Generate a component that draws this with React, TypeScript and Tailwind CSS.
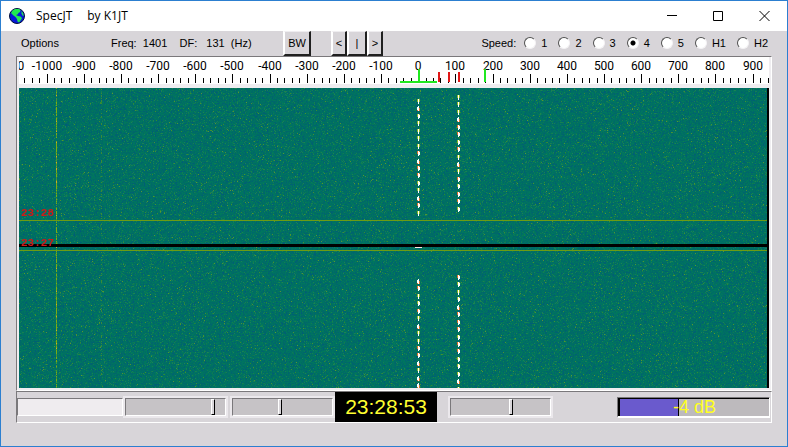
import { useEffect, useRef, useState } from "react";

const WIDTH = 748;
const HEIGHT = 300;

function makeRandom(seed: number) {
  let s = seed;
  return () => {
    s = (s * 1664525 + 1013904223) % 4294967296;
    return s / 4294967296;
  };
}

function drawWaterfall(ctx: CanvasRenderingContext2D) {
  const random = makeRandom(1401);
  const image = ctx.createImageData(WIDTH, HEIGHT);
  for (let i = 0; i < WIDTH * HEIGHT; i++) {
    const n = random();
    const j = random();
    let r = 0;
    let g = 102 + j * 18;
    let b = 106 - j * 14;
    if (n > 0.988) {
      r = 40 + j * 50;
      g = 136 + j * 16;
      b = 50;
    } else if (n > 0.88) {
      r = 8 + j * 22;
      g = 120 + j * 12;
      b = 82;
    } else if (n < 0.06) {
      g = 94;
      b = 118;
    }
    image.data[i * 4] = r;
    image.data[i * 4 + 1] = g;
    image.data[i * 4 + 2] = b;
    image.data[i * 4 + 3] = 255;
  }
  ctx.putImageData(image, 0, 0);

  for (let y = 0; y < HEIGHT; y++) {
    const n = random();
    if (n > 0.1) {
      ctx.fillStyle = n > 0.93 ? "#d0a828" : n > 0.45 ? "#7cac14" : "#449434";
      ctx.fillRect(37, y, 1, 1);
    }
    if (random() > 0.72) {
      ctx.fillStyle = "#3a8a38";
      ctx.fillRect(82, y, 1, 1);
    }
  }

  const trace = (x: number, from: number, to: number) => {
    for (let y = from; y < to; y += 7.44) {
      const top = Math.round(y);
      const n = random();
      ctx.fillStyle = n > 0.5 ? "#d8702c" : "#8cb828";
      ctx.fillRect(x - 1, top + (n > 0.7 ? 2 : 0), 3, 3);
      ctx.fillStyle = "#ffffff";
      ctx.fillRect(x, top, 1, 5);
      if (n > 0.35) {
        ctx.fillRect(n > 0.7 ? x - 1 : x, top + 1, 2, 3);
      }
    }
  };
  trace(399, 11, 126);
  trace(439, 7, 122);
  trace(399, 191, 300);
  trace(439, 187, 300);

  ctx.fillStyle = "#6c9c14";
  ctx.fillRect(0, 132, WIDTH, 1);
  ctx.fillRect(0, 162, WIDTH, 1);
  ctx.fillStyle = "#000000";
  ctx.fillRect(0, 156, WIDTH, 3);
  ctx.fillStyle = "#ffe8e0";
  ctx.fillRect(396, 159, 7, 1);
}

function Waterfall() {
  const ref = useRef<HTMLCanvasElement>(null);
  useEffect(() => {
    const ctx = ref.current?.getContext("2d");
    if (ctx) drawWaterfall(ctx);
  }, []);
  return (
    <div className="relative border-r-2 border-black">
      <canvas ref={ref} width={WIDTH} height={HEIGHT} className="block h-auto w-full" />
      <span className="absolute top-[40%] left-[2px] font-['Liberation_Mono',monospace] text-[11px] leading-[10px] font-bold text-[#d01818]">
        23:28
      </span>
      <span className="absolute top-[50%] left-[2px] font-['Liberation_Mono',monospace] text-[11px] leading-[10px] font-bold text-[#d01818]">
        23:27
      </span>
    </div>
  );
}

const freqToX = (f: number) => Math.round(399.2 + f * 0.3716);

function Ruler() {
  const ticks = Array.from({ length: 101 }, (_, i) => -1060 + i * 20);
  const labels = Array.from({ length: 21 }, (_, i) => -1100 + i * 100);
  return (
    <svg viewBox="0 0 750 31" className="block h-auto w-full" shapeRendering="crispEdges">
      <rect width="750" height="27" fill="#fff" />
      <rect y="27" width="750" height="4" fill="#efedf0" />
      {ticks.map((f) => (
        <rect
          key={f}
          x={freqToX(f)}
          y={f % 100 === 0 ? 17 : 21}
          width="1"
          height={f % 100 === 0 ? 9 : 5}
          fill="#000"
        />
      ))}
      <g className="font-[Roboto,sans-serif] text-[12px]" textAnchor="middle">
        {labels.map((f) => (
          <text key={f} x={freqToX(f)} y="13">
            {f}
          </text>
        ))}
      </g>
      <g fill="#20e820">
        <rect x="381" y="24" width="37" height="2" />
        <rect x="399" y="12" width="2" height="13" />
        <rect x="465" y="12" width="2" height="13" />
      </g>
      <g fill="#e01818">
        <rect x="419" y="15" width="2" height="10" />
        <rect x="429" y="15" width="2" height="10" />
        <rect x="439" y="15" width="2" height="10" />
      </g>
    </svg>
  );
}

function Scale({ label, value }: { label: string; value: number }) {
  return (
    <input
      type="range"
      aria-label={label}
      defaultValue={value}
      className="h-[18px] w-[101px] appearance-none border border-t-[#7a787b] border-r-white border-b-white border-l-[#7a787b] bg-[#c6c3c6] ring-2 ring-[#ebe8ec] [&::-webkit-slider-thumb]:h-4 [&::-webkit-slider-thumb]:w-1 [&::-webkit-slider-thumb]:appearance-none [&::-webkit-slider-thumb]:border [&::-webkit-slider-thumb]:border-t-white [&::-webkit-slider-thumb]:border-r-black [&::-webkit-slider-thumb]:border-b-black [&::-webkit-slider-thumb]:border-l-white [&::-webkit-slider-thumb]:bg-[#d9d6da]"
    />
  );
}

function ToolButton({ children, className }: { children: string; className: string }) {
  return (
    <button
      className={`h-[25px] border-t border-r-2 border-b-2 border-l-2 border-t-[#efedf0] border-r-[#202020] border-b-[#202020] border-l-white text-center ${className}`}
    >
      {children}
    </button>
  );
}

function Globe() {
  return (
    <svg viewBox="0 0 16 16" className="h-4 w-4">
      <circle cx="8" cy="8" r="7.5" fill="#0818d8" stroke="#001038" />
      <path d="M3.500 2.500 6 1h4l1.500 1L11 4 9.500 5 8.500 6.500 7 7l2 1 2.500.5L13 10l-1 2-2 2.500-1.500-1L8 11 6.500 9 4.500 7.500 2 5z" fill="#20e850" />
      <path d="m12.500 3 1.500 2 .8 3-1.300-.5-1-2z" fill="#20e850" />
    </svg>
  );
}

export default function App() {
  const [speed, setSpeed] = useState("4");
  return (
    <div className="flex min-h-screen flex-col border border-[#2c7fd0] bg-[#d8d5d9] font-['Liberation_Sans',Arial,sans-serif] text-[11px] leading-4 text-black">
      <header className="flex h-[30px] items-center bg-white pl-2">
        <Globe />
        <h1 className="ml-[11px] grow font-['Open_Sans',sans-serif] text-[12px] whitespace-pre">
          SpecJT<span className="ml-[15px]">by K1JT</span>
        </h1>
        <div className="flex">
          <button aria-label="Minimize" className="grid h-7 w-[46px] place-items-center">
            <svg viewBox="0 0 11 11" className="h-[11px] w-[11px]" stroke="#000">
              <path d="M0 4.500h10" />
            </svg>
          </button>
          <button aria-label="Maximize" className="grid h-7 w-[46px] place-items-center">
            <svg viewBox="0 0 11 11" className="h-[11px] w-[11px]" stroke="#000" fill="none">
              <path d="M.5.5h9v9h-9z" />
            </svg>
          </button>
          <button aria-label="Close" className="grid h-7 w-[46px] place-items-center">
            <svg viewBox="0 0 11 11" className="h-[11px] w-[11px]" stroke="#000">
              <path d="m.5 0 10 10m0-10-10 10" />
            </svg>
          </button>
        </div>
      </header>

      <main className="px-[15px]">
        <div className="flex h-[25px] items-start leading-6">
          <button className="ml-[5px] w-[90px] text-left">Options</button>
          <p className="w-[156px] whitespace-pre">Freq:  1401    DF:   131  (Hz)</p>
          <ToolButton className="ml-4 w-7 leading-[22px]">BW</ToolButton>
          <div className="ml-5 flex leading-[22px]">
            <ToolButton className="w-4">{"<"}</ToolButton>
            <ToolButton className="w-5">|</ToolButton>
            <ToolButton className="w-4">{">"}</ToolButton>
          </div>
          <fieldset className="ml-auto flex items-center pr-1">
            <legend className="float-left mr-2">Speed:</legend>
            <div className="flex gap-[11px]">
              {["1", "2", "3", "4", "5", "H1", "H2"].map((s) => (
                <label key={s} className="flex items-center gap-[5px]">
                  <input
                    type="radio"
                    name="speed"
                    checked={speed === s}
                    onChange={() => setSpeed(s)}
                    className="h-3 w-3 appearance-none rounded-full border border-t-[#505050] border-r-[#f4f2f4] border-b-[#f4f2f4] border-l-[#505050] bg-white checked:bg-[radial-gradient(circle,#000_2px,#fff_3px)]"
                  />
                  {s}
                </label>
              ))}
            </div>
          </fieldset>
        </div>

        <section className="border border-t-[#7a787b] border-r-white border-b-white border-l-[#7a787b] bg-[#efedf0] px-[2px] pb-[2px]">
          <Ruler />
          <Waterfall />
        </section>

        <footer className="flex h-8 items-center border border-t-[#7a787b] border-r-white border-b-white border-l-[#7a787b]">
          <input
            aria-label="Message"
            className="h-[18px] w-[106px] border border-t-[#7a787b] border-r-white border-b-white border-l-[#7a787b] bg-[#efecef] px-1"
          />
          <div className="ml-[2px] flex gap-[6px]">
            <Scale label="Brightness" value={89} />
            <Scale label="Contrast" value={47} />
          </div>
          <time className="ml-[2px] w-[102px] bg-black text-center text-[21px] leading-[30px] text-[#ffff30]">
            23:28:53
          </time>
          <div className="ml-[13px] flex">
            <Scale label="Gain" value={61} />
          </div>
          <div
            role="meter"
            aria-label="Level"
            aria-valuenow={-4}
            aria-valuemin={-30}
            aria-valuemax={20}
            className="mr-px ml-auto h-[21px] w-[153px] border border-t-[#7a787b] border-r-white border-b-2 border-b-white border-l-[#7a787b]"
          >
            <div className="h-full border-t border-l-2 border-black bg-[linear-gradient(to_right,#6a5acd_58px,#000_58px,#000_59px,#bdbabd_59px)] text-center text-[18px] leading-4 text-[#ffff20]">
              -4 dB
            </div>
          </div>
        </footer>
      </main>
    </div>
  );
}
